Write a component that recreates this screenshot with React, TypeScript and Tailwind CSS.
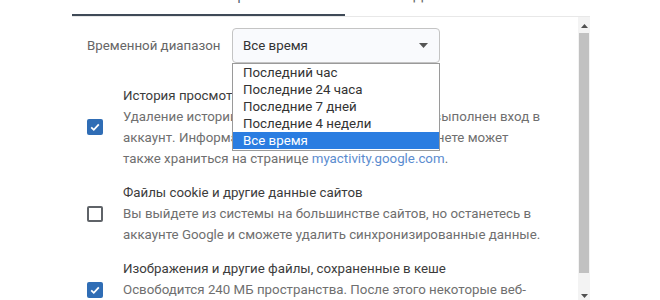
import React from "react";

function Checkbox({ checked }: { checked: boolean }) {
  if (checked) {
    return (
      <div className="w-[16px] h-[16px] rounded-[2px] bg-[#2f6db5] flex items-center justify-center shrink-0">
        <svg width="12" height="12" viewBox="0 0 12 12">
          <path d="M2.2 6.3 L4.8 8.8 L9.8 3.4" fill="none" stroke="#ffffff" strokeWidth="1.8" />
        </svg>
      </div>
    );
  }
  return <div className="w-[16px] h-[16px] rounded-[2px] border-2 border-[#5f6368] shrink-0" />;
}

function Section({
  checked,
  title,
  lines,
}: {
  checked: boolean;
  title: string;
  lines: React.ReactNode[];
}) {
  return (
    <div className="flex items-center gap-[20px]">
      <Checkbox checked={checked} />
      <div className="flex flex-col text-[13.3px] leading-[21px] whitespace-nowrap">
        <div className="text-[#3c3c3c]">{title}</div>
        {lines.map((l, i) => (
          <div key={i} className="text-[#6f6f6f]">
            {l}
          </div>
        ))}
      </div>
    </div>
  );
}

export default function App() {
  const options = ["Последний час", "Последние 24 часа", "Последние 7 дней", "Последние 4 недели", "Все время"];
  return (
    <div
      className="w-[660px] h-[300px] overflow-hidden bg-white"
      style={{ fontFamily: "Roboto, 'Noto Sans', sans-serif" }}
    >
      <div className="flex ml-[72px] w-[518px] h-[17px] border-b border-[#e8e8e8]">
        <div className="w-[273px] h-[16px] border-b-2 border-[#3f4a57] flex justify-center overflow-hidden">
          <span className="text-[13.3px] leading-[16px] text-[#4d5b6b] -mt-[12px]">Основные настройки</span>
        </div>
        <div className="flex-1 flex justify-center overflow-hidden">
          <span className="text-[13.3px] leading-[16px] text-[#666] -mt-[12px]">Дополнительные</span>
        </div>
      </div>
      <div className="flex ml-[72px] w-[518px] h-[283px]">
        <div className="flex-1 pl-[15px] flex flex-col">
          <div className="flex items-center mt-[11px] h-[35px] relative z-10">
            <div className="w-[145px] text-[13.3px] text-[#666]">Временной диапазон</div>
            <div className="relative w-[208px] h-[35px]">
              <div className="w-full h-full border border-[#c4c4c4] rounded-[4px] bg-[#f9fafd] flex items-center justify-between pl-[10px] pr-[11px] text-[13.3px] text-[#333]">
                <span>Все время</span>
                <svg width="9" height="5" viewBox="0 0 9 5">
                  <path d="M0 0 L9 0 L4.5 5 Z" fill="#555" />
                </svg>
              </div>
              <div className="absolute left-0 top-full w-full border border-[#9a9a9a] bg-white pt-[0px] pb-[1px] text-[13.3px] leading-[17px]">
                {options.map((o, i) => (
                  <div
                    key={o}
                    className={
                      i === options.length - 1
                        ? "pl-[10px] bg-[#2a7de1] text-white"
                        : "pl-[10px] text-[#333]"
                    }
                  >
                    {o}
                  </div>
                ))}
              </div>
            </div>
          </div>
          <div className="flex flex-col gap-[13px] mt-[22px]">
            <Section
              checked
              title="История просмотров"
              lines={[
                "Удаление истории со всех устройств, на которых выполнен вход в",
                "аккаунт. Информация о других действиях в Интернете может",
                <span>
                  также храниться на странице <span className="text-[#5b8ccf]">myactivity.google.com</span>.
                </span>,
              ]}
            />
            <Section
              checked={false}
              title="Файлы cookie и другие данные сайтов"
              lines={[
                "Вы выйдете из системы на большинстве сайтов, но останетесь в",
                "аккаунте Google и сможете удалить синхронизированные данные.",
              ]}
            />
            <Section
              checked
              title="Изображения и другие файлы, сохраненные в кеше"
              lines={[
                "Освободится 240 МБ пространства. После этого некоторые веб-",
                "сайты могут загружаться медленнее.",
              ]}
            />
          </div>
        </div>
        <div className="w-[12px] bg-[#f3f3f3] flex flex-col items-center">
          <svg width="7" height="4" viewBox="0 0 7 4" className="mt-[7px]">
            <path d="M0 4 L7 4 L3.5 0 Z" fill="#505050" />
          </svg>
          <div className="w-[10px] h-[240px] bg-[#c1c1c1] mt-[5px]" />
          <div className="flex-1" />
          <svg width="7" height="4" viewBox="0 0 7 4" className="mb-[2px]">
            <path d="M0 0 L7 0 L3.5 4 Z" fill="#505050" />
          </svg>
        </div>
      </div>
    </div>
  );
}
